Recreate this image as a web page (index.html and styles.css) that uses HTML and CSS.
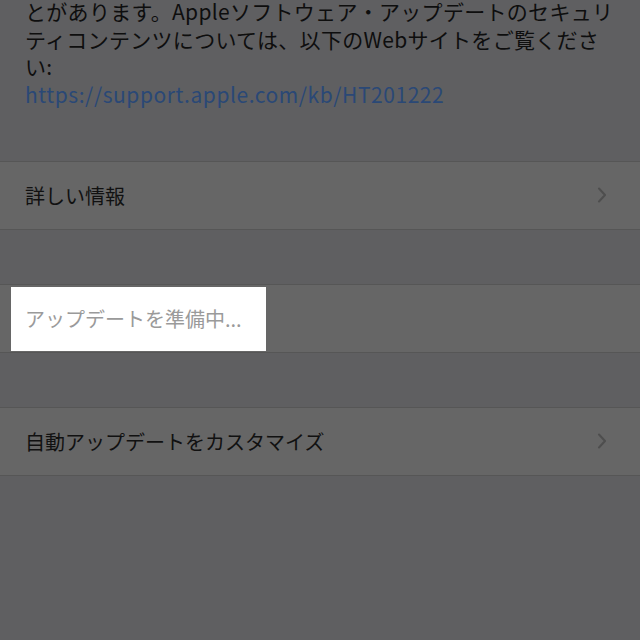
FILE: index.html
```html
<!DOCTYPE html>
<html lang="ja">
<head>
  <meta charset="UTF-8" />
  <title>ソフトウェア・アップデート</title>
  <meta name="viewport" content="width=device-width, initial-scale=1.0" />
  <link rel="stylesheet" href="styles.css">
</head>

<body>
  <div class="screen">
    <p class="notes">
      とがあります。Appleソフトウェア・アップデートのセキュリ<br>
      ティコンテンツについては、以下のWebサイトをご覧くださ<br>
      い:<br>
      <span class="link">https://support.apple.com/kb/HT201222</span>
    </p>

    <div class="group">
      <div class="cell">
        <span class="label">詳しい情報</span>
        <svg class="chevron" width="10" height="16" viewBox="0 0 10 16">
          <path d="M2 1.5 L8 8 L2 14.5" fill="none" stroke="#4e4e4e" stroke-width="2" stroke-linecap="round" stroke-linejoin="round" />
        </svg>
      </div>
    </div>

    <div class="group">
      <div class="cell status">
        <div class="spotlight">アップデートを準備中...</div>
      </div>
    </div>

    <div class="group">
      <div class="cell">
        <span class="label">自動アップデートをカスタマイズ</span>
        <svg class="chevron" width="10" height="16" viewBox="0 0 10 16">
          <path d="M2 1.5 L8 8 L2 14.5" fill="none" stroke="#4e4e4e" stroke-width="2" stroke-linecap="round" stroke-linejoin="round" />
        </svg>
      </div>
    </div>
  </div>
</body>
</html>
```

FILE: styles.css
```css
html,
body {
  margin: 0;
  height: 100%;
}

body {
  font-family: 'Noto Sans CJK JP', 'Noto Sans', sans-serif;
  background: #5f5f61;
  color: #111;
}

.screen {
  width: 640px;
  height: 640px;
  overflow: hidden;
  display: flex;
  flex-direction: column;
}

/* top of the page is scrolled off, so the first line sits at the edge */
.notes {
  margin: -2px 0 0;
  padding: 0 0 0 25px;
  font-size: 21px;
  line-height: 27.7px;
  letter-spacing: 0.3px;
  white-space: nowrap;
  color: #0e0e0e;
}

.link {
  color: #2a4876;
  letter-spacing: 0.55px;
}

.group {
  margin-top: 54px;
  background: #666666;
  border-top: 1px solid #565656;
  border-bottom: 1px solid #565656;
}

.group:first-of-type {
  margin-top: 52px;
}

.cell {
  height: 67px;
  display: flex;
  align-items: center;
  justify-content: space-between;
  padding: 0 33px 0 25px;
  font-size: 20px;
}

.chevron {
  display: block;
}

.cell.status {
  padding: 0 0 0 11px;
  align-items: flex-start;
}

.spotlight {
  margin-top: 2px;
  width: 241px;
  height: 64px;
  padding-left: 14px;
  background: #fff;
  color: #9a9a9a;
  font-size: 20px;
  line-height: 64px;
}
```
